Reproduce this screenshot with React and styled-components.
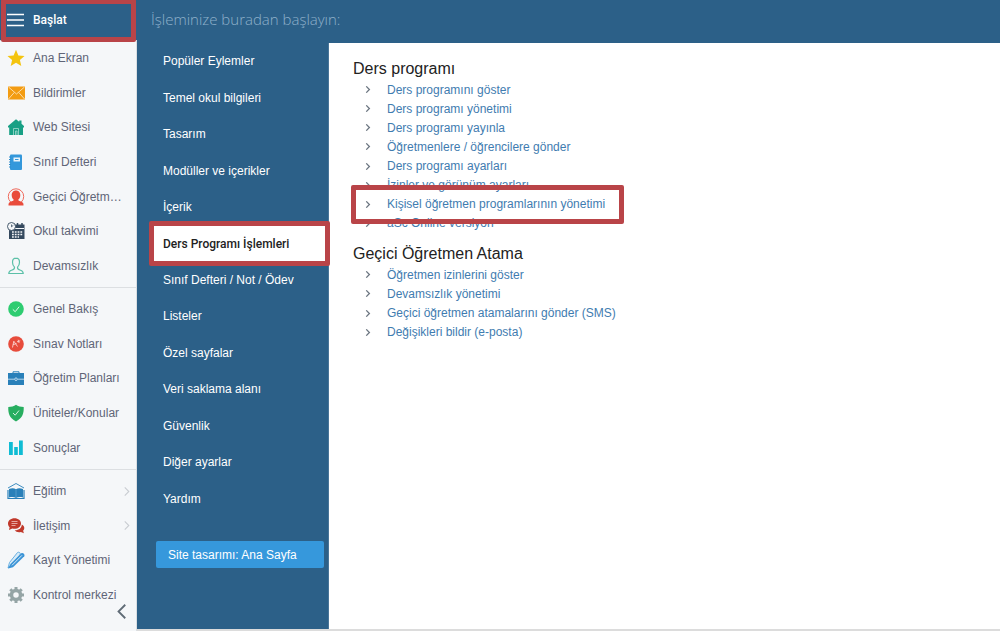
import React from 'react';
import styled, { createGlobalStyle, css } from 'styled-components';

const blue = '#2c6088';
const red = '#b94448';
const sans = "Roboto, 'Liberation Sans', sans-serif";
const arial = "'Liberation Sans', Arial, sans-serif";

const GlobalStyle = createGlobalStyle`
  * { box-sizing: border-box; }
  body { margin: 0; background: #fff; font-family: ${arial}; }
  ul { list-style: none; margin: 0; padding: 0; }
  a { text-decoration: none; }
`;

const Page = styled.div`
  min-height: 100vh;
  display: flex;
  flex-direction: column;
`;

const Header = styled.header`
  display: flex;
  align-items: center;
  height: 43px;
  background: ${blue};
`;

const StartButton = styled.button`
  position: relative;
  display: flex;
  align-items: center;
  gap: 8px;
  width: 137px;
  height: 39px;
  margin-bottom: 4px;
  padding: 0 0 0 7px;
  border: 0;
  background: none;
  color: #fff;
  font: 500 12px ${sans};
`;

const Highlight = styled.span`
  position: absolute;
  z-index: 2;
  inset: ${(p) => p.$inset};
  border: 5px solid ${red};
  border-radius: 2px;
  pointer-events: none;
`;

const Title = styled.h1`
  margin: 0;
  padding: 0 14px;
  color: #8fb0ca;
  font: 300 15px/39px 'Open Sans', sans-serif;
  height: 43px;
`;

const Body = styled.div`
  flex: 1;
  display: flex;
`;

const Sidebar = styled.nav`
  position: relative;
  flex: none;
  width: 137px;
  margin-top: -3px;
  background: #f5f7f9;
  border-top: 1px solid #d5d9dc;
  border-right: 1px solid #dadfe3;
`;

const SideGroup = styled.ul`
  display: grid;
  grid-auto-rows: 1fr;
  height: ${(p) => p.$height}px;
  & + & {
    margin-top: 4px;
    padding-top: 4px;
    box-sizing: content-box;
    border-top: 1px solid #dcdfe2;
  }
`;

const SideLink = styled.a`
  display: flex;
  align-items: center;
  gap: 8px;
  height: 100%;
  padding: 0 6px 0 7px;
  color: #5f6577;
  font: 12px ${arial};
  svg { flex: none; }
`;

const SideLabel = styled.span`
  flex: 1;
  white-space: nowrap;
`;

const Collapse = styled.button`
  position: absolute;
  right: 10px;
  bottom: 12px;
  display: flex;
  padding: 0;
  border: 0;
  background: none;
`;

const Workspace = styled.div`
  flex: 1;
  display: flex;
  border-bottom: 2px solid #dcdcdc;
`;

const Menu = styled.nav`
  flex: none;
  width: 192px;
  background: ${blue};
  border-right: 1px solid #4a7699;
`;

const MenuList = styled.ul`
  display: grid;
  grid-auto-rows: 1fr;
  height: 474px;
`;

const MenuItem = styled.li`
  position: relative;
  padding: 0 0 0 16px;
`;

const MenuLink = styled.a`
  display: flex;
  align-items: center;
  height: 100%;
  padding-left: 10px;
  color: #fff;
  font: 400 12px ${arial};
  ${(p) => p.$active && css`
    background: #fff;
    color: #222;
    font: 500 12px ${sans};
  `}
`;

const DesignButton = styled.button`
  display: block;
  width: 168px;
  height: 27px;
  margin: 24px 0 0 19px;
  padding: 0 12px;
  border: 0;
  border-radius: 2px;
  background: #3698dc;
  color: #fff;
  font: 400 12px ${arial};
  text-align: left;
`;

const Content = styled.main`
  flex: 1;
  padding: 15px 24px;
  background: #fff;
`;

const Section = styled.section`
  margin-bottom: 10px;
`;

const SectionTitle = styled.h2`
  margin: 0;
  color: #222;
  font: 400 16px/22px ${arial};
`;

const LinkList = styled.ul`
  display: grid;
  grid-auto-rows: 1fr;
  height: ${(p) => p.$height}px;
`;

const LinkItem = styled.li`
  position: relative;
  display: flex;
  align-items: center;
  gap: 16px;
  justify-self: start;
  padding-left: 12px;
`;

const ContentLink = styled.a`
  color: #3f7cb0;
  font: 12px ${arial};
  white-space: nowrap;
`;

const Svg = ({ children, size = 18, ...rest }) => (
  <svg width={size} height={size} viewBox="0 0 18 18" fill="none" aria-hidden="true" {...rest}>{children}</svg>
);

const icons = {
  star: <path d="M9 .8l2.4 5.6 6.1.5-4.6 4 1.4 6L9 13.700l-5.300 3.200 1.400-6-4.600-4 6.100-.5z" fill="#f4c40f" />,
  mail: (
    <>
      <rect x="1" y="2.500" width="17" height="13" fill="#f39c12" />
      <path d="M1.500 3l8 7 8-7M1.500 15l5.700-6.500M17.500 15l-5.700-6.500" stroke="#fde3b8" strokeWidth=".9" />
    </>
  ),
  house: (
    <>
      <path d="M9 1.200L1 8v1.500h1.200V17H16V9.500h1V8l-2.500-2.200V2.500h-2.300v1.300z" fill="#18a085" />
      <path d="M6.500 17v-6.500h5V17M8.500 17v-4h1.500v4" stroke="#a5d9cf" strokeWidth=".8" />
    </>
  ),
  book: (
    <>
      <rect x="3" y="1.500" width="12" height="15.500" rx="1" fill="#3498db" />
      <path d="M2 4h2M2 6.500h2M2 9h2M2 11.500h2M2 14h2" stroke="#2f8ccb" />
      <rect x="6.500" y="4.500" width="6.500" height="4" fill="#e9f4fb" />
      <path d="M8 6.500h3.500" stroke="#3498db" />
    </>
  ),
  teacher: (
    <>
      <circle cx="9" cy="8.500" r="7.700" stroke="#ef6a5c" />
      <path d="M9 2.500c-3 0-4.300 2.200-4.300 4.800 0 2.100 1 3.500 2.100 4.400-.2 1.500-3.900 1.600-4.900 3.300-.4.700-.4 1.400-.4 2.500h15c0-1.100 0-1.800-.4-2.500-1-1.700-4.700-1.800-4.900-3.300 1.100-.9 2.100-2.300 2.100-4.400 0-2.600-1.300-4.800-4.300-4.800z" fill="#e94c3c" />
    </>
  ),
  calendar: (
    <>
      <path d="M2 2.500h15.500v14.500H2z" fill="#34495e" />
      <path d="M8 6.500h9" stroke="#f5f7f9" />
      <circle cx="4.500" cy="4.500" r="4" fill="#f5f7f9" stroke="#34495e" strokeWidth=".9" />
      <path d="M4.500 4.800V2.500M4.500 4.800l1.800-1.500" stroke="#34495e" strokeWidth=".8" />
      <path d="M10.500 1v3M15 1v3" stroke="#34495e" strokeWidth="1.500" />
      <path d="M5 10h10.500M5 12.500h10.500M5 15h7" stroke="#f5f7f9" strokeWidth="1.500" strokeDasharray="1.800 1" />
    </>
  ),
  absent: (
    <path d="M9 1.200c-2.500 0-3.500 1.800-3.500 4 0 2.500 1 4 2 5 .2 1.800-.5 2.300-3 3.100-2 .6-2.700 1.200-2.700 3.200h14.400c0-2-.7-2.600-2.700-3.200-2.500-.8-3.200-1.300-3-3.100 1-1 2-2.500 2-5 0-2.200-1-4-3.500-4z" stroke="#5cc0a8" strokeWidth="1.200" />
  ),
  check: (
    <>
      <circle cx="9" cy="9" r="7.800" fill="#2ecc71" />
      <path d="M5.800 9.400l2.400 2.300 4-5" stroke="#e7faef" />
    </>
  ),
  grades: (
    <>
      <circle cx="9" cy="9" r="7.800" fill="#e74c3c" />
      <path d="M5.500 12.500l1.300-6.300 3.700 5.300M6 9.700l3.500-1.200M10 6.800l3.200-1M11.200 4.800l.9 3.200" stroke="#fbd5d0" strokeWidth=".9" />
    </>
  ),
  briefcase: (
    <>
      <path d="M6 4.500V2.800h6v1.700" stroke="#2980b9" />
      <path d="M1 4h16v12H1z" fill="#2980b9" />
      <path d="M1 10.200h6.500M10.500 10.200H17" stroke="#c7e0f0" strokeWidth=".9" />
      <circle cx="9" cy="10.200" r="1.300" stroke="#c7e0f0" strokeWidth=".9" />
    </>
  ),
  shield: (
    <>
      <path d="M9 .8c2 1.500 4.800 2.200 7.700 2.200.3 6-1 11-7.700 14.500C2.300 14 1 9 1.300 3 4.200 3 7 2.300 9 .8z" fill="#27ae60" />
      <path d="M6 9l2.200 2.200 3.800-4.700" stroke="#d4f1e0" />
    </>
  ),
  chart: <path d="M2 3h3.800v13H2zM7.200 8h3.600v8H7.200zM12 1.500h3.800V16H12z" fill="#0fbcd4" />,
  education: (
    <>
      <path d="M1 6l8-4.500L17 6" stroke="#2980b9" strokeWidth=".9" />
      <path d="M2 7c3-1.200 5-1 7 .3 2-1.300 4-1.500 7-.3v8.500c-3-.8-5-.6-7 .4-2-1-4-1.200-7-.4z" fill="#2980b9" />
      <path d="M1 8v8.500h16V8" stroke="#2980b9" strokeWidth="1.200" />
      <path d="M9 7.500V16" stroke="#65a7d3" strokeWidth=".7" />
    </>
  ),
  chat: (
    <>
      <path d="M7.500 1.200c3.700 0 6.500 2.300 6.500 5.300s-2.800 5.300-6.500 5.300c-.8 0-1.500-.1-2.200-.3L2 13l.6-2.700C1.500 9.300 1 8 1 6.500c0-3 2.800-5.300 6.500-5.300z" fill="#c0392b" />
      <path d="M14.800 7.500c1.600.8 2.500 2 2.500 3.500 0 1-.4 2-1.200 2.700l.8 2.600-3-1.300c-2.500.6-5 0-6.200-1.700 4.500 0 7-2.500 7.100-5.800z" fill="#c0392b" />
      <path d="M4.500 4.500h6M4.500 6.500h6M4.500 8.500h4" stroke="#f0c3be" strokeWidth=".8" />
    </>
  ),
  pencils: (
    <>
      <path d="M1 17l1.500-5.500L10.500 1.500c1.500-1 3.600.6 2.500 2.300L5 14z" fill="#d7ebf8" stroke="#5aa7de" strokeWidth=".9" />
      <path d="M1 17.500l5-1.200L17.300 5.200c1-2-1.500-4.200-3.300-2.700L3.500 13z" fill="#3c94d6" />
      <path d="M5 14.300L15 4.300" stroke="#d7ebf8" strokeWidth="1" />
    </>
  ),
  gear: (
    <>
      <circle cx="9" cy="9" r="4.500" stroke="#95a5a6" strokeWidth="3.500" />
      <path d="M9 1v3M9 14v3M1 9h3M14 9h3M3.300 3.300l2.200 2.200M12.500 12.500l2.200 2.200M3.300 14.700l2.200-2.200M12.500 5.500l2.200-2.200" stroke="#95a5a6" strokeWidth="3" />
    </>
  ),
};

const groups = [
  { height: 242, items: [
    ['star', 'Ana Ekran'], ['mail', 'Bildirimler'], ['house', 'Web Sitesi'], ['book', 'Sınıf Defteri'],
    ['teacher', 'Geçici Öğretm…'], ['calendar', 'Okul takvimi'], ['absent', 'Devamsızlık'],
  ] },
  { height: 173, items: [
    ['check', 'Genel Bakış'], ['grades', 'Sınav Notları'], ['briefcase', 'Öğretim Planları'],
    ['shield', 'Üniteler/Konular'], ['chart', 'Sonuçlar'],
  ] },
  { height: 138, items: [
    ['education', 'Eğitim', true], ['chat', 'İletişim', true], ['pencils', 'Kayıt Yönetimi'], ['gear', 'Kontrol merkezi'],
  ] },
];

const menu = [
  'Popüler Eylemler', 'Temel okul bilgileri', 'Tasarım', 'Modüller ve içerikler', 'İçerik',
  'Ders Programı İşlemleri', 'Sınıf Defteri / Not / Ödev', 'Listeler', 'Özel sayfalar',
  'Veri saklama alanı', 'Güvenlik', 'Diğer ayarlar', 'Yardım',
];
const activeMenu = 'Ders Programı İşlemleri';

const sections = [
  { title: 'Ders programı', height: 153, links: [
    'Ders programını göster', 'Ders programı yönetimi', 'Ders programı yayınla',
    'Öğretmenlere / öğrencilere gönder', 'Ders programı ayarları', 'İzinler ve görünüm ayarları',
    'Kişisel öğretmen programlarının yönetimi', 'aSc Online versiyon',
  ] },
  { title: 'Geçici Öğretmen Atama', height: 77, links: [
    'Öğretmen izinlerini göster', 'Devamsızlık yönetimi',
    'Geçici öğretmen atamalarını gönder (SMS)', 'Değişikleri bildir (e-posta)',
  ] },
];
const markedLink = 'Kişisel öğretmen programlarının yönetimi';

const Chevron = ({ color, width, height, left, weight = 1.2 }) => (
  <svg width={width} height={height} viewBox="0 0 6 10" fill="none" aria-hidden="true">
    <path d={left ? 'M5.500 .5L1 5l4.500 4.500' : 'M.5 .5L5 5 .5 9.500'} stroke={color} strokeWidth={weight} />
  </svg>
);

export default function App() {
  return (
    <Page>
      <GlobalStyle />
      <Header>
        <StartButton>
          <svg width="18" height="14" viewBox="0 0 18 14" aria-hidden="true">
            <path d="M0 1.500h17M0 7h17M0 12.500h17" stroke="#fff" strokeWidth="1.500" />
          </svg>
          Başlat
          <Highlight $inset="-1px 1px -3px 1px" />
        </StartButton>
        <Title>İşleminize buradan başlayın:</Title>
      </Header>
      <Body>
        <Sidebar>
          {groups.map((group) => (
            <SideGroup key={group.height} $height={group.height}>
              {group.items.map(([icon, label, more]) => (
                <li key={label}>
                  <SideLink href="#">
                    <Svg>{icons[icon]}</Svg>
                    <SideLabel>{label}</SideLabel>
                    {more && <Chevron color="#c9cdd2" width={6} height={9} />}
                  </SideLink>
                </li>
              ))}
            </SideGroup>
          ))}
          <Collapse aria-label="Menüyü daralt"><Chevron left color="#5f6b76" width={9} height={15} /></Collapse>
        </Sidebar>
        <Workspace>
          <Menu>
            <MenuList>
              {menu.map((label) => (
                <MenuItem key={label}>
                  <MenuLink href="#" $active={label === activeMenu}>{label}</MenuLink>
                  {label === activeMenu && <Highlight $inset="-4px -2px -4px 12px" />}
                </MenuItem>
              ))}
            </MenuList>
            <DesignButton>Site tasarımı: Ana Sayfa</DesignButton>
          </Menu>
          <Content>
            {sections.map((section) => (
              <Section key={section.title}>
                <SectionTitle>{section.title}</SectionTitle>
                <LinkList $height={section.height}>
                  {section.links.map((label) => (
                    <LinkItem key={label}>
                      <Chevron color="#6b7580" width={6} height={7} weight={1.8} />
                      <ContentLink href="#">{label}</ContentLink>
                      {label === markedLink && <Highlight $inset="-10px -19px -10px -2px" />}
                    </LinkItem>
                  ))}
                </LinkList>
              </Section>
            ))}
          </Content>
        </Workspace>
      </Body>
    </Page>
  );
}
